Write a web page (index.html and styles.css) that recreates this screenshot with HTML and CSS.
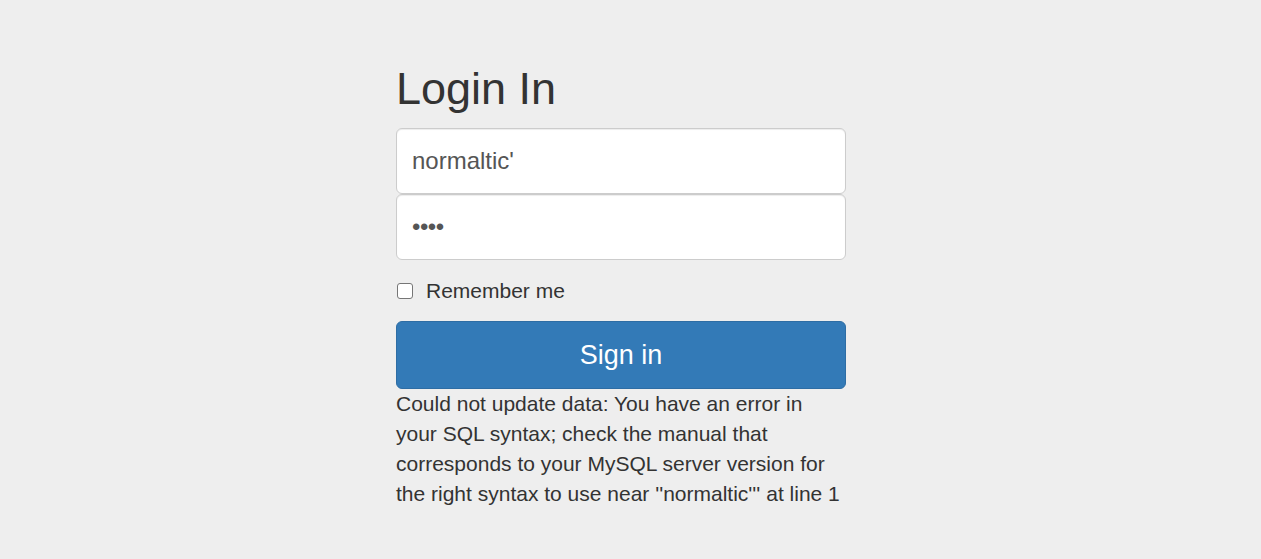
FILE: index.html
```html
<!DOCTYPE html>
<html lang="en">
<head>
<meta charset="utf-8">
<title>Login In</title>
<link rel="stylesheet" href="styles.css">
</head>
<body>
<div class="page">
  <form class="signin">
    <h2 class="title">Login In</h2>
    <div class="field first">normaltic'</div>
    <div class="field second"><span class="dots">••••</span></div>
    <label class="remember"><span class="box"></span><span>Remember me</span></label>
    <button type="button" class="btn">Sign in</button>
    <p class="error">Could not update data: You have an error in your SQL syntax; check the manual that corresponds to your MySQL server version for the right syntax to use near ''normaltic''' at line 1</p>
  </form>
</div>
</body>
</html>
```
FILE: styles.css
```css
html, body {
  margin: 0;
  padding: 0;
  background: #eeeeee;
  font-family: "Liberation Sans", Arial, sans-serif;
  color: #333333;
}
.page {
  padding: 64px 19px 40px 0;
  display: flex;
  justify-content: center;
}
.signin {
  width: 450px;
  display: flex;
  flex-direction: column;
}
.title {
  margin: 0 0 15px;
  font-size: 45px;
  font-weight: 500;
  line-height: 49px;
  color: #333;
}
.field {
  box-sizing: border-box;
  height: 66px;
  border: 1px solid #cccccc;
  border-radius: 6px;
  background: #fff;
  box-shadow: inset 0 1px 1px rgba(0,0,0,.075);
  padding: 0 15px;
  display: flex;
  align-items: center;
  font-size: 24px;
  color: #555555;
}
.field.second {
  height: 66px;
}
.dots {
  font-size: 24px;
  letter-spacing: -0.5px;
  color: #555;
}
.remember {
  margin: 16px 0 15px;
  display: flex;
  align-items: center;
  gap: 13px;
  font-size: 21px;
  line-height: 30px;
  color: #333;
}
.box {
  width: 14px;
  height: 14px;
  border: 1px solid #767676;
  border-radius: 3px;
  background: #fff;
  margin-left: 1px;
}
.btn {
  box-sizing: border-box;
  height: 68px;
  width: 100%;
  border: 1px solid #2e6da4;
  border-radius: 6px;
  background: #337ab7;
  color: #fff;
  font-family: inherit;
  font-size: 27px;
  padding: 0 24px;
}
.error {
  margin: 0;
  font-size: 21px;
  line-height: 30px;
  color: #333;
}
```
